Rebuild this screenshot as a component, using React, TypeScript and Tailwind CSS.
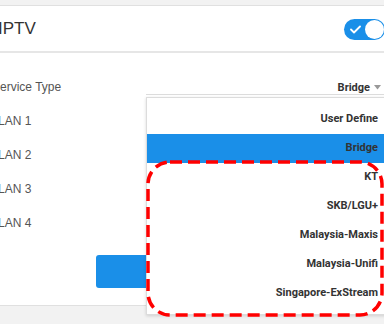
import React from "react";

const items = ["User Define", "Bridge", "KT", "SKB/LGU+", "Malaysia-Maxis", "Malaysia-Unifi", "Singapore-ExStream"];

export default function App() {
  return (
    <div className="relative w-[384px] h-[324px] overflow-hidden bg-[#f2f2f2]" style={{ fontFamily: '"Liberation Sans", Arial, sans-serif' }}>
      <div className="pt-[5px]">
        <div className="ml-[-4px] w-[392px] h-[301px] bg-white border-t border-b border-[#e0e0e0]">
          <div className="h-[47px] flex items-center justify-between border-b-2 border-[#e6e6e6]">
            <div className="text-[17px] text-[#333] pl-[2px] pt-[1px]">IPTV</div>
            <div className="relative w-[41px] h-[21px] rounded-full bg-[#1a8fe8] mr-[3px] mt-[2px]">
              <svg className="absolute left-[6px] top-[6px]" width="11" height="9" viewBox="0 0 11 9">
                <path d="M1 4.5 L4 7.5 L10 1.5" stroke="white" strokeWidth="1.8" fill="none" strokeLinecap="round" strokeLinejoin="round" />
              </svg>
              <div className="absolute right-[1px] top-[1px] w-[19px] h-[19px] rounded-full bg-white" />
            </div>
          </div>
          <div className="relative pt-[27px]">
            <div className="flex items-center h-[14px]">
              <div className="text-[12px] text-[#555] ml-[-4px] w-[150px]">Service Type</div>
            </div>
            <div className="flex flex-col gap-[20px] pt-[20px] text-[12px] text-[#555] pl-[2px]">
              <div className="h-[14px] leading-[14px]">LAN 1</div>
              <div className="h-[14px] leading-[14px]">LAN 2</div>
              <div className="h-[14px] leading-[14px]">LAN 3</div>
              <div className="h-[14px] leading-[14px]">LAN 4</div>
            </div>
            <div className="mt-[25px] ml-[100px] w-[120px] h-[33px] rounded-[3px] bg-[#1a8fe8]" />
          </div>
        </div>
      </div>

      {/* select */}
      <div className="absolute left-[146px] top-[80px] w-[238px] h-[15px] border-b border-[#dcdcdc] flex items-center justify-end pr-[3px]" style={{ fontFamily: 'Roboto, sans-serif' }}>
        <span className="text-[11px] font-bold text-[#333] leading-none">Bridge</span>
        <svg className="ml-[4px]" width="7" height="5" viewBox="0 0 7 5"><path d="M0 0 L7 0 L3.5 4.5 Z" fill="#999" /></svg>
      </div>

      {/* dropdown */}
      <div className="absolute left-[146px] top-[97px] w-[242px] h-[218px] bg-white border border-[#dcdcdc] shadow-[0_1px_3px_rgba(0,0,0,0.15)] pt-[7px]" style={{ fontFamily: 'Roboto, sans-serif' }}>
        {items.map((it) => (
          <div
            key={it}
            className={`h-[29px] flex items-center justify-end pr-[9px] text-[11px] font-bold text-[#333] ${it === "Bridge" ? "bg-[#1a8fe8]" : ""}`}
          >
            {it}
          </div>
        ))}
      </div>

      {/* red annotation */}
      <svg className="absolute left-[146px] top-[160px]" width="240" height="158" viewBox="0 0 240 158">
        <rect x="2" y="2" width="234" height="153" rx="22" ry="22" fill="none" stroke="#f00" strokeWidth="3.5" strokeDasharray="12 6" />
      </svg>
    </div>
  );
}
